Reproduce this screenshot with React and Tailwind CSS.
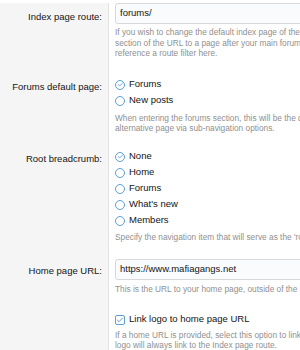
import { Check } from "lucide-react";

const font = { fontFamily: '"Liberation Sans", Arial, sans-serif' };

const Radio = ({ checked, label }) => (
  <div className="flex items-center h-[16px] text-[9.5px] text-[#141414]">
    <span className="w-[10px] h-[10px] rounded-full border border-[#5b9fd3] flex items-center justify-center mr-[4px] bg-white">
      {checked && <Check size={7} strokeWidth={3} className="text-[#5b9fd3]" />}
    </span>
    {label}
  </div>
);

const Help = ({ children, className = "" }) => (
  <p className={`text-[8.3px] leading-[10.5px] text-[#8f8f8f] whitespace-nowrap ${className}`}>
    {children}
  </p>
);

const Row = ({ label, labelTop, children, className = "" }) => (
  <div className={`flex ${className}`}>
    <div className="w-[109px] shrink-0 bg-[#f5f5f5] border-r border-[#e3e3e3] pr-[6px] text-right text-[9.5px] text-[#141414]">
      <div style={{ paddingTop: labelTop }}>{label}</div>
    </div>
    <div className="flex-1 pl-[6px] min-w-0 overflow-hidden">{children}</div>
  </div>
);

const Input = ({ value }) => (
  <div className="h-[21px] w-[220px] border border-[#d8d8d8] rounded-[3px] bg-[#f9fbfd] flex items-center pl-[4px] text-[9.5px] text-[#141414]">
    {value}
  </div>
);

export default function App() {
  return (
    <div className="w-[300px] h-[350px] overflow-hidden bg-white" style={font}>
      <Row label="Index page route:" labelTop={7} className="pt-[3px]">
        <Input value="forums/" />
        <Help className="mt-[3px] pb-[18px]">
          If you wish to change the default index page of the forum, you may change the first
          <br />
          section of the URL to a page after your main forum directory. You may also
          <br />
          reference a route filter here.
        </Help>
      </Row>
      <Row label="Forums default page:" labelTop={3}>
        <Radio checked label="Forums" />
        <Radio label="New posts" />
        <Help className="mt-[4px] pb-[15px]">
          When entering the forums section, this will be the default page displayed. Users can select an
          <br />
          alternative page via sub-navigation options.
        </Help>
      </Row>
      <Row label="Root breadcrumb:" labelTop={3}>
        <Radio checked label="None" />
        <Radio label="Home" />
        <Radio label="Forums" />
        <Radio label="What's new" />
        <Radio label="Members" />
        <Help className="mt-[3px] pb-[17px]">
          Specify the navigation item that will serve as the 'root' of the breadcrumb.
        </Help>
      </Row>
      <Row label="Home page URL:" labelTop={5}>
        <Input value="https://www.mafiagangs.net" />
        <Help className="mt-[4px] pb-[17px]">
          This is the URL to your home page, outside of the board.
        </Help>
      </Row>
      <Row label="" labelTop={0} className="h-[60px]">
        <div className="flex items-center h-[16px] text-[9.5px] text-[#141414]">
          <span className="w-[10px] h-[10px] rounded-[2px] border border-[#5b9fd3] flex items-center justify-center mr-[4px] bg-white">
            <Check size={8} strokeWidth={3} className="text-[#5b9fd3]" />
          </span>
          Link logo to home page URL
        </div>
        <Help className="mt-[2px]">
          If a home URL is provided, select this option to link the logo to it. Otherwise the
          <br />
          logo will always link to the Index page route.
        </Help>
      </Row>
    </div>
  );
}
